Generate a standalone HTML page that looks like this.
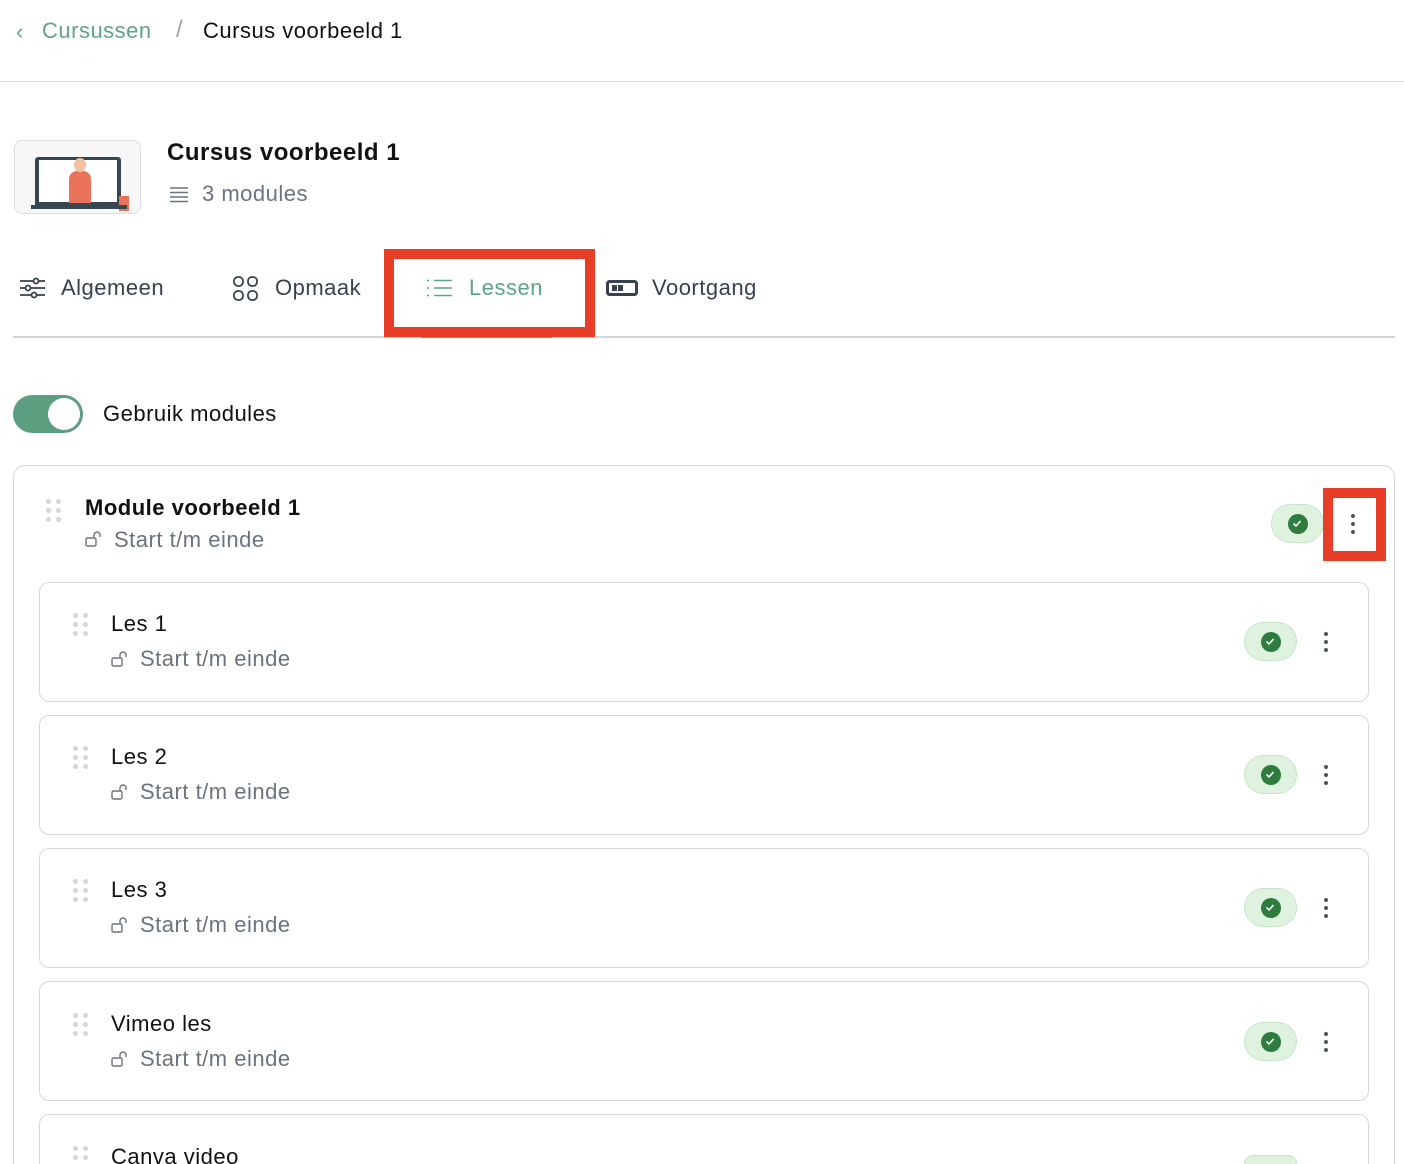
<!DOCTYPE html>
<html style="width:1404px;height:1164px;overflow:hidden"><head><meta charset="utf-8"><style>
*{box-sizing:border-box;margin:0;padding:0}
body{width:1404px;height:1164px;overflow:hidden;background:#fff;font-family:"Liberation Sans",sans-serif;position:relative;color:#111;letter-spacing:0.5px}
.a{position:absolute;white-space:nowrap}
.gray{color:#6b7280}
.card{position:absolute;left:39px;width:1330px;height:120px;border:1px solid #d6d8dd;border-radius:10px;background:#fff}
.dots{position:absolute;width:18px;height:24px}
.dots i{position:absolute;width:5px;height:5px;border-radius:50%;background:#d4d6da}
.pill{position:absolute;width:53px;height:39px;border-radius:20px;background:#dff2e0;border:1px solid #c5e6c8}
.pill b{position:absolute;left:16px;top:9px;width:20px;height:20px;border-radius:50%;background:#2e7d3e}
.keb{position:absolute;width:4px}
.keb i{display:block;width:4px;height:4px;border-radius:50%;background:#4b5563;margin-bottom:4px}
</style></head><body>
<div class="a" style="left:16px;top:19px;font-size:22px;color:#5ba683">‹</div>
<div class="a" style="left:42px;top:18px;font-size:22px;color:#5ba683">Cursussen</div>
<div class="a" style="left:176px;top:16px;font-size:24px;color:#9ca3af">/</div>
<div class="a" style="left:203px;top:18px;font-size:22px;color:#111">Cursus voorbeeld 1</div>
<div class="a" style="left:0;top:81px;width:1404px;height:1px;background:#dcdcdc"></div>

<div class="a" style="left:14px;top:140px;width:127px;height:74px;border:1px solid #ddd;border-radius:8px;background:#f7f7f7;overflow:hidden">
<div class="a" style="left:20px;top:16px;width:86px;height:52px;background:#37474f;border-radius:3px"></div>
<div class="a" style="left:24px;top:19px;width:78px;height:42px;background:#fff"></div>
<div class="a" style="left:54px;top:30px;width:22px;height:32px;background:#e8735a;border-radius:8px 8px 0 0"></div>
<div class="a" style="left:59px;top:17px;width:12px;height:14px;background:#f4c2a1;border-radius:50%"></div>
<div class="a" style="left:104px;top:55px;width:10px;height:15px;background:#e8735a"></div>
<div class="a" style="left:16px;top:64px;width:96px;height:4px;background:#37474f"></div>
</div>
<div class="a" style="left:167px;top:139px;font-size:24px;font-weight:bold;color:#111">Cursus voorbeeld 1</div>
<svg class="a" style="left:169px;top:186px" width="20" height="18" viewBox="0 0 20 18" fill="none" stroke="#6b7280" stroke-width="1.5"><path d="M1 2h18M1 6.5h18M1 11h18M1 15.5h18"/></svg>
<div class="a gray" style="left:202px;top:181px;font-size:22px">3 modules</div>

<svg class="a" style="left:20px;top:277px" width="25" height="22" viewBox="0 0 25 22" fill="none" stroke="#374151" stroke-width="1.8"><path d="M0 4h25M0 11h25M0 18h25"/><circle cx="16" cy="4" r="2.5" fill="#fff"/><circle cx="8" cy="11" r="2.5" fill="#fff"/><circle cx="14" cy="18" r="2.5" fill="#fff"/></svg>
<div class="a" style="left:61px;top:275px;font-size:22px;color:#374151">Algemeen</div>
<svg class="a" style="left:233px;top:276px" width="25" height="25" viewBox="0 0 25 25" fill="none" stroke="#374151" stroke-width="1.8"><rect x="1" y="1" width="9" height="9" rx="4"/><rect x="15" y="1" width="9" height="9" rx="4"/><rect x="1" y="15" width="9" height="9" rx="4"/><rect x="15" y="15" width="9" height="9" rx="4"/></svg>
<div class="a" style="left:275px;top:275px;font-size:22px;color:#374151">Opmaak</div>
<svg class="a" style="left:427px;top:279px" width="25" height="18" viewBox="0 0 25 18" fill="none" stroke="#5ba683" stroke-width="1.6"><path d="M7 1.5h18M7 9h18M7 16.5h18M0 1.5h2M0 9h2M0 16.5h2"/></svg>
<div class="a" style="left:469px;top:275px;font-size:22px;color:#5ba683">Lessen</div>
<svg class="a" style="left:606px;top:280px" width="32" height="16" viewBox="0 0 32 16" fill="none"><rect x="1.5" y="1.5" width="29" height="13" rx="2" stroke="#374151" stroke-width="3"/><rect x="6" y="5" width="5" height="6" fill="#374151"/><rect x="12" y="5" width="5" height="6" fill="#374151"/></svg>
<div class="a" style="left:652px;top:275px;font-size:22px;color:#374151">Voortgang</div>
<div class="a" style="left:13px;top:336px;width:1382px;height:2px;background:#d1d5db"></div>
<div class="a" style="left:421px;top:335px;width:131px;height:3px;background:#5ba683"></div>
<div class="a" style="left:384px;top:249px;width:211px;height:88px;border:10px solid #e83e27"></div>

<div class="a" style="left:13px;top:395px;width:70px;height:38px;border-radius:19px;background:#5b9e80"></div>
<div class="a" style="left:48px;top:398px;width:32px;height:32px;border-radius:50%;background:#fff"></div>
<div class="a" style="left:103px;top:401px;font-size:22px;color:#111">Gebruik modules</div>

<div class="a" style="left:13px;top:465px;width:1382px;height:699px;border:1px solid #d6d8dd;border-bottom:none;border-radius:12px 12px 0 0"></div>
<div class="dots" style="left:46px;top:499px"><i style="left:0;top:0"></i><i style="left:10px;top:0"></i><i style="left:0;top:9px"></i><i style="left:10px;top:9px"></i><i style="left:0;top:18px"></i><i style="left:10px;top:18px"></i></div>
<div class="a" style="left:85px;top:495px;font-size:22px;font-weight:bold">Module voorbeeld 1</div>
<svg class="a" style="left:85px;top:530px" width="18" height="18" viewBox="0 0 18 18" fill="none" stroke="#6b7280" stroke-width="1.4"><rect x="1" y="8" width="10" height="8" rx="1.5"/><path d="M9 8V5a3 3 0 0 1 6 0v2"/></svg>
<div class="a gray" style="left:114px;top:527px;font-size:22px">Start t/m einde</div>
<div class="pill" style="left:1271px;top:504px"><b></b></div>
<svg class="a" style="left:1290px;top:516px" width="14" height="14" viewBox="0 0 14 14" fill="none" stroke="#fff" stroke-width="1.6"><path d="M3.5 7.5l2.5 2.5 4.5-5"/></svg>
<div class="keb" style="left:1351px;top:514px"><i></i><i></i><i></i></div>
<div class="a" style="left:1323px;top:488px;width:63px;height:73px;border:10px solid #e83e27"></div>

<div class="card" style="top:582px"></div>
<div class="card" style="top:715px"></div>
<div class="card" style="top:848px"></div>
<div class="card" style="top:981px"></div>
<div class="card" style="top:1114px;height:50px;border-bottom:none;border-radius:10px 10px 0 0"></div>

<div id="rows"></div>
<script>
var names=["Les 1","Les 2","Les 3","Vimeo les","Canva video"];
var h="";
for(var i=0;i<5;i++){var t=582+i*133.2;
h+='<div class="dots" style="left:73px;top:'+(t+31)+'px"><i style="left:0;top:0"></i><i style="left:10px;top:0"></i><i style="left:0;top:9px"></i><i style="left:10px;top:9px"></i><i style="left:0;top:18px"></i><i style="left:10px;top:18px"></i></div>';
h+='<div class="a" style="left:111px;top:'+(t+29)+'px;font-size:22px">'+names[i]+'</div>';
if(i<4){
h+='<svg class="a" style="left:111px;top:'+(t+68)+'px" width="18" height="18" viewBox="0 0 18 18" fill="none" stroke="#6b7280" stroke-width="1.4"><rect x="1" y="8" width="10" height="8" rx="1.5"/><path d="M9 8V5a3 3 0 0 1 6 0v2"/></svg>';
h+='<div class="a gray" style="left:140px;top:'+(t+64)+'px;font-size:22px">Start t/m einde</div>';
h+='<div class="pill" style="left:1244px;top:'+(t+40)+'px"><b></b></div>';
h+='<svg class="a" style="left:1263px;top:'+(t+52)+'px" width="14" height="14" viewBox="0 0 14 14" fill="none" stroke="#fff" stroke-width="1.6"><path d="M3.5 7.5l2.5 2.5 4.5-5"/></svg>';
h+='<div class="keb" style="left:1324px;top:'+(t+50)+'px"><i></i><i></i><i></i></div>';}
else{h+='<div class="pill" style="left:1244px;top:'+(t+40)+'px;height:'+(1164-t-40)+'px;border-bottom:none;border-radius:20px 20px 0 0"></div>';}}
document.getElementById("rows").innerHTML=h;
</script>
</body></html>
